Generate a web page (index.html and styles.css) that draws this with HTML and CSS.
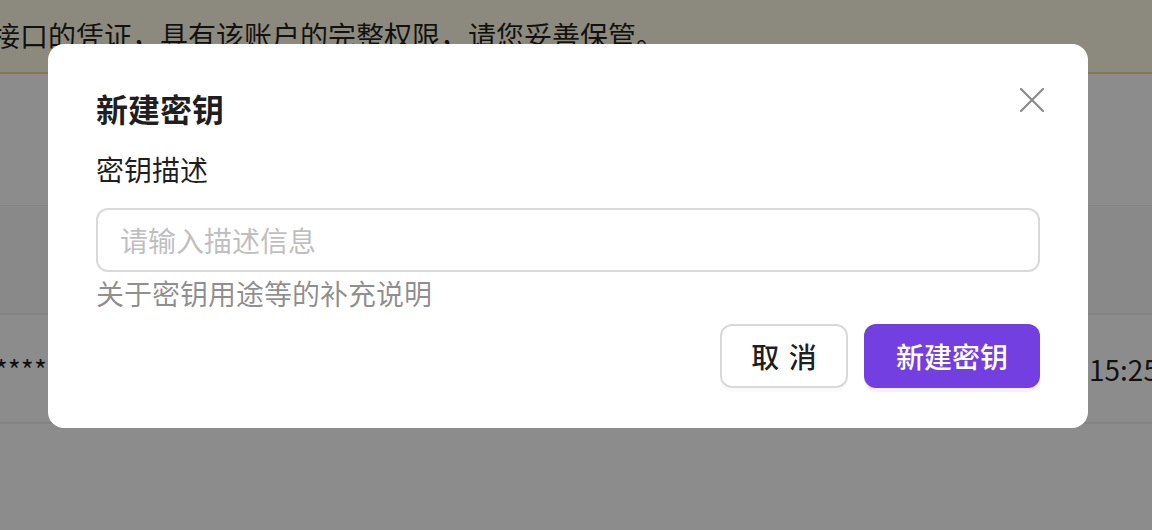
FILE: index.html
```html
<!DOCTYPE html>
<html lang="zh-CN">
<head>
  <meta charset="UTF-8">
  <title>新建密钥</title>
  <link rel="stylesheet" href="styles.css">
</head>
<body>

  <div class="page">
    <div class="notice">
      <span class="notice-text">接口的凭证，具有该账户的完整权限，请您妥善保管。</span>
    </div>

    <div class="gap-area"></div>

    <div class="table">
      <div class="table-head"></div>
      <div class="table-row">
        <div class="cell-key"><span>sk-************</span></div>
        <div class="cell-mid"></div>
        <div class="cell-time">15:25:31</div>
      </div>
    </div>
  </div>

  <div class="mask">
    <div class="modal">
      <button class="modal-close" type="button" aria-label="关闭">
        <svg width="24" height="24" viewBox="0 0 24 24">
          <path d="M1 1 L23 23 M23 1 L1 23" stroke="#8a8a8a" stroke-width="2.2" stroke-linecap="round" fill="none"/>
        </svg>
      </button>

      <div class="modal-title">新建密钥</div>

      <div class="form-item">
        <label class="form-label" for="desc">密钥描述</label>
        <input class="form-input" type="text" id="desc" placeholder="请输入描述信息" />
        <div class="form-help">关于密钥用途等的补充说明</div>
      </div>

      <div class="modal-footer">
        <button class="btn btn-default" type="button"><span class="spaced">取消</span></button>
        <button class="btn btn-primary" type="button">新建密钥</button>
      </div>
    </div>
  </div>

</body>
</html>
```

FILE: styles.css
```css
body { margin: 0; font-family: "Noto Sans CJK SC", "Noto Sans", sans-serif; font-size: 28px; color: rgba(0,0,0,0.88); overflow: hidden; height: 530px; background: #fff; }

.page { width: 1152px; }
.notice { height: 72px; background: #fffbe6; border-bottom: 2px solid #f0d98a; display: flex; align-items: center; white-space: nowrap; overflow: hidden; }
.notice-text { margin-left: -8px; padding-bottom: 2px; }

.gap-area { height: 131px; }

.table-head { height: 107px; background: #fafafa; border-top: 1px solid #f5f5f5; border-bottom: 2px solid #eeeeee; }
.table-row { height: 107px; display: flex; align-items: center; border-bottom: 2px solid #eeeeee; white-space: nowrap; }
.cell-key { width: 47px; overflow: hidden; display: flex; justify-content: flex-end; flex-shrink: 0; }
.cell-mid { flex: 1; }
.cell-time { width: 63px; overflow: hidden; flex-shrink: 0; }

.mask { position: fixed; inset: 0; background: rgba(0,0,0,0.45); display: flex; align-items: flex-start; padding: 44px 0 0 48px; }

.modal { position: relative; width: 1040px; box-sizing: border-box; background: #fff; border-radius: 16px; padding: 40px 48px 40px; }
.modal-close { position: absolute; top: 44px; right: 44px; width: 24px; height: 24px; padding: 0; border: 0; background: none; cursor: pointer; display: block; }
.modal-close svg { display: block; }

.modal-title { font-size: 32px; font-weight: 700; line-height: 48px; color: rgba(0,0,0,0.88); margin-bottom: 16px; }

.form-label { display: block; line-height: 42px; color: rgba(0,0,0,0.88); margin-bottom: 18px; }
.form-input { display: block; width: 100%; box-sizing: border-box; height: 64px; border: 2px solid #d9d9d9; border-radius: 12px; padding: 0 22px; font-family: inherit; font-size: 28px; color: rgba(0,0,0,0.88); outline: none; }
.form-input::placeholder { color: #bfbfbf; }
.form-help { line-height: 42px; color: rgba(0,0,0,0.45); margin-bottom: 10px; }

.modal-footer { display: flex; justify-content: flex-end; gap: 16px; }
.btn { height: 64px; border-radius: 12px; font-family: inherit; font-size: 28px; font-weight: 500; padding: 0; white-space: nowrap; cursor: pointer; }
.btn-default { width: 128px; background: #fff; border: 2px solid #d9d9d9; color: rgba(0,0,0,0.88); box-shadow: 0 4px 0 rgba(0,0,0,0.02); }
.btn-primary { width: 176px; background: #743fe0; border: 0; color: #fff; box-shadow: 0 4px 0 rgba(116,63,224,0.08); }
.spaced { letter-spacing: 0.34em; margin-right: -0.34em; }
```
